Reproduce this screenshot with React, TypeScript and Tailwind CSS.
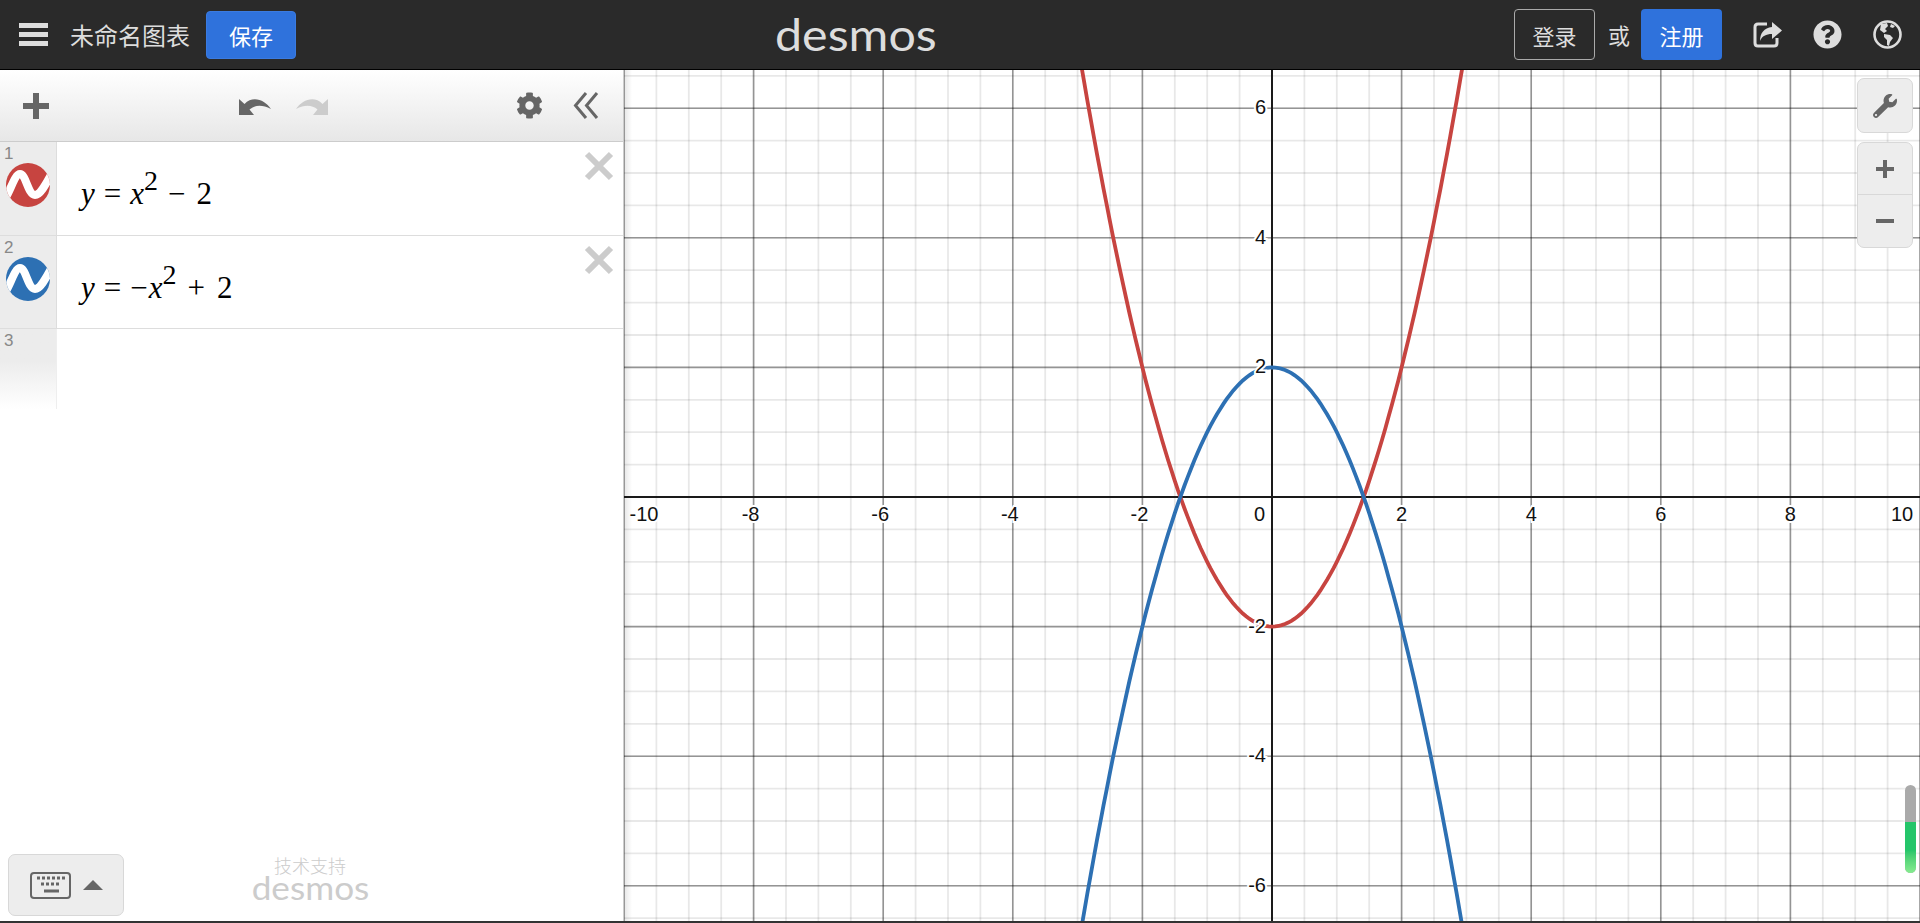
import React from 'react';
import { FaCog, FaQuestionCircle, FaWrench } from 'react-icons/fa';

const WIDTH = 1296;
const HEIGHT = 851;
const UNIT = 64.8;
const CX = WIDTH / 2;
const CY = 427;

const sx = (v: number) => CX + v * UNIT;
const sy = (v: number) => CY - v * UNIT;

function curve(fn: (x: number) => number) {
  const pts: string[] = [];
  for (let x = -3.4; x <= 3.4; x += 0.05) {
    pts.push(`${sx(x).toFixed(1)},${sy(fn(x)).toFixed(1)}`);
  }
  return pts.join(' ');
}

function range(from: number, to: number, step: number) {
  const out: number[] = [];
  for (let v = from; v <= to + 0.001; v += step) out.push(v);
  return out;
}

function Graph() {
  const xMinor = range(-10, 10, 0.5);
  const yMinor = range(-7, 7, 0.5);
  const xMajor = range(-10, 10, 2);
  const yMajor = range(-6, 6, 2);
  return (
    <svg width={WIDTH} height={HEIGHT} className="block">
      {xMinor.map(v => <line key={v} x1={sx(v)} x2={sx(v)} y1={0} y2={HEIGHT} stroke="#000" strokeOpacity={0.09} strokeWidth={1.8} />)}
      {yMinor.map(v => <line key={v} x1={0} x2={WIDTH} y1={sy(v)} y2={sy(v)} stroke="#000" strokeOpacity={0.09} strokeWidth={1.8} />)}
      {xMajor.map(v => <line key={v} x1={sx(v)} x2={sx(v)} y1={0} y2={HEIGHT} stroke="#000" strokeOpacity={0.36} strokeWidth={1.6} />)}
      {yMajor.map(v => <line key={v} x1={0} x2={WIDTH} y1={sy(v)} y2={sy(v)} stroke="#000" strokeOpacity={0.36} strokeWidth={1.6} />)}
      <line x1={sx(0)} x2={sx(0)} y1={0} y2={HEIGHT} stroke="#1a1a1a" strokeWidth={2} />
      <line x1={0} x2={WIDTH} y1={sy(0)} y2={sy(0)} stroke="#1a1a1a" strokeWidth={2} />
      <polyline points={curve(x => x * x - 2)} fill="none" stroke="#c74440" strokeWidth={3.8} />
      <polyline points={curve(x => -x * x + 2)} fill="none" stroke="#2d70b3" strokeWidth={3.8} />
      <g fontFamily="'Liberation Sans', Arial, sans-serif" fontSize={20} fill="#111" stroke="#fff" strokeWidth={4} paintOrder="stroke">
        {xMajor.filter(v => v !== 0).map(v => (
          <text key={v} x={v === -10 ? sx(v) + 20 : v === 10 ? sx(v) - 18 : sx(v) + (v < 0 ? -3 : 0)} y={sy(0) + 24} textAnchor="middle">{v}</text>
        ))}
        {yMajor.filter(v => v !== 0).map(v => (
          <text key={v} x={sx(0) - 6} y={sy(v) + 6} textAnchor="end">{v}</text>
        ))}
        <text x={sx(0) - 7} y={sy(0) + 24} textAnchor="end">0</text>
      </g>
    </svg>
  );
}

function ColorIcon({ color, id }: { color: string; id: string }) {
  return (
    <svg width={44} height={44} viewBox="0 0 44 44" className="block">
      <clipPath id={id}><circle cx={22} cy={22} r={22} /></clipPath>
      <circle cx={22} cy={22} r={22} fill={color} />
      <path clipPath={`url(#${id})`} d="M0 34 C5 26 9 11 14 11 C20 11 22 32 29 32 C34 32 39 23 46 10" fill="none" stroke="#fff" strokeWidth={8} />
    </svg>
  );
}

function CloseIcon() {
  return (
    <svg width={30} height={30} viewBox="0 0 30 30" className="block">
      <path d="M3 3 L27 27 M27 3 L3 27" stroke="#ccc" strokeWidth={6} />
    </svg>
  );
}

function PlusIcon({ size, thick }: { size: number; thick: number }) {
  const m = size / 2;
  return (
    <svg width={size} height={size} className="block">
      <path d={`M0 ${m} H${size} M${m} 0 V${size}`} stroke="#666" strokeWidth={thick} />
    </svg>
  );
}

function UndoIcon({ color, flip }: { color: string; flip?: boolean }) {
  return (
    <svg width={32} height={18} viewBox="0 0 32 18" className={flip ? 'block -scale-x-100' : 'block'}>
      <path d="M0 2 L0 18 L15 18 L10.5 12.5 C16 8 23 7.5 32 12 C26 3 14 -2 5.5 7 Z" fill={color} />
    </svg>
  );
}

function ShareIcon() {
  return (
    <svg width={29} height={27} viewBox="0 0 29 27" className="block">
      <path d="M14 3 H5 Q2 3 2 6 V22 Q2 25 5 25 H21 Q24 25 24 22 V17" fill="none" stroke="#ddd" strokeWidth={3} />
      <path d="M19 1 L29 9.5 L19 18 V13 C13 13 9 15 7 20 C7 12 11 7 19 6 Z" fill="#ddd" />
    </svg>
  );
}

function GlobeIcon() {
  return (
    <svg width={29} height={29} viewBox="0 0 29 29" className="block">
      <circle cx={14.5} cy={14.5} r={13} fill="none" stroke="#ddd" strokeWidth={2.6} />
      <path d="M8 4 L14 3 L15 6 L12 9 L14 11 L11 13 L7 10 Z M11 14 L17 15 L20 18 L17 22 L16 26 L14 25 L14 20 L11 17 Z M18 4 L22 6 L20 8 L17 7 Z" fill="#ddd" />
    </svg>
  );
}

function Row({ n, color, children }: { n: number; color: string; children: React.ReactNode }) {
  return (
    <div className="flex h-[93.5px] border-b border-[#ddd] relative">
      <div className="w-[57px] bg-[#ececec] border-r border-[#ddd] shrink-0 pl-[4px] pt-[2px]">
        <div className="text-[17px] leading-[19px] text-[#888]">{n}</div>
        <div className="ml-[2px]"><ColorIcon color={color} id={`wave-${n}`} /></div>
      </div>
      <div className="flex-1 pl-[24px] pt-[32px] text-[31px] leading-[40px] text-black font-['Liberation_Serif',serif] whitespace-nowrap">
        {children}
      </div>
      <div className="absolute top-[9px] right-[9px]"><CloseIcon /></div>
    </div>
  );
}

function Sup() {
  return <span className="text-[28px] relative -top-[14px] leading-none">2</span>;
}

export default function App() {
  return (
    <div className="w-[1920px] h-[923px] overflow-hidden flex flex-col bg-white font-['Liberation_Sans','Noto_Sans_CJK_SC',sans-serif]">
      {/* header */}
      <header className="h-[70px] shrink-0 bg-[#2a2a2a] border-b border-black relative flex items-center justify-between font-['Noto_Sans_CJK_SC',sans-serif]">
        <div className="flex items-center">
          <div className="ml-[19px] w-[29px] flex flex-col gap-[4px]">
            <div className="h-[5px] bg-[#ddd]" />
            <div className="h-[5px] bg-[#ddd]" />
            <div className="h-[5px] bg-[#ddd]" />
          </div>
          <span className="ml-[22px] text-[24px] leading-[32px] text-[#ddd]">未命名图表</span>
          <button className="ml-[16px] w-[90px] h-[48px] rounded-[4px] bg-[#2f72dc] border border-[#3b7be0] text-white text-[22px] leading-none">保存</button>
        </div>
        <div className="absolute left-[775px] top-[4px] origin-left scale-x-[1.1] text-[44px] leading-[60px] text-[#ddd] font-['Lato',sans-serif]">desmos</div>
        <div className="flex items-center pr-[18px]">
          <button className="w-[81px] h-[51px] rounded-[4px] border border-[#aaa] text-[#ddd] text-[22px] leading-none">登录</button>
          <span className="ml-[13px] text-[22px] text-[#ddd]">或</span>
          <button className="ml-[11px] w-[81px] h-[51px] rounded-[4px] bg-[#2f72dc] text-white text-[22px] leading-none">注册</button>
          <div className="ml-[31px]"><ShareIcon /></div>
          <FaQuestionCircle className="ml-[31px] text-[#ddd]" size={29} />
          <div className="ml-[31px]"><GlobeIcon /></div>
        </div>
      </header>

      <div className="flex flex-1 min-h-0">
        {/* expression list */}
        <aside className="w-[624px] shrink-0 border-r border-[#ccc] relative flex flex-col">
          <div className="h-[72px] shrink-0 bg-gradient-to-b from-white to-[#e7e7e7] border-b border-[#ccc] flex items-center">
            <div className="ml-[23px]"><PlusIcon size={26} thick={6} /></div>
            <div className="ml-[190px]"><UndoIcon color="#666" /></div>
            <div className="ml-[25px]"><UndoIcon color="#ccc" flip /></div>
            <FaCog className="ml-[188px] text-[#666]" size={27} />
            <svg width={26} height={27} viewBox="0 0 26 27" className="ml-[30px] block">
              <path d="M13 1 L2.5 13.5 L13 26 M24 1 L13.5 13.5 L24 26" fill="none" stroke="#666" strokeWidth={3} />
            </svg>
          </div>
          <Row n={1} color="#c74440">
            <i>y</i><span className="ml-[9px]">=</span><i className="ml-[9px]">x</i><Sup /><span className="ml-[10px]">−</span><span className="ml-[11px]">2</span>
          </Row>
          <Row n={2} color="#2d70b3">
            <i>y</i><span className="ml-[9px]">=</span><span className="ml-[9px]">−</span><i className="ml-[1px]">x</i><Sup /><span className="ml-[11px]">+</span><span className="ml-[12px]">2</span>
          </Row>
          <div className="w-[57px] h-[80px] bg-gradient-to-b from-[#ececec] from-[40%] to-white border-r border-[#eee] pl-[4px] pt-[2px]">
            <div className="text-[17px] leading-[19px] text-[#888]">3</div>
          </div>

          <div className="absolute left-[8px] bottom-[5px] w-[116px] h-[62px] rounded-[7px] bg-[#ededed] border border-[#d8d8d8] flex items-center">
            <svg width={41} height={27} viewBox="0 0 41 27" className="ml-[21px] block">
              <rect x={1} y={1} width={39} height={25} rx={3} fill="none" stroke="#666" strokeWidth={2} />
              <path d="M7 6 h3 M12 6 h3 M17 6 h3 M22 6 h3 M27 6 h3 M32 6 h3 M11 12 h3 M16 12 h3 M21 12 h3 M26 12 h3 M14 19 h15" stroke="#666" strokeWidth={3} />
            </svg>
            <div className="ml-[12px] w-0 h-0 border-l-[10px] border-r-[10px] border-b-[10px] border-l-transparent border-r-transparent border-b-[#666]" />
          </div>
          <div className="absolute left-[241px] bottom-[20px] w-[138px] flex flex-col items-center">
            <div className="text-[18px] leading-[20px] font-light text-[#ccc] font-['Noto_Sans_CJK_SC',sans-serif]">技术支持</div>
            <div className="scale-x-[1.1] text-[32px] leading-[26px] text-[#ccc] font-['Lato',sans-serif]">desmos</div>
          </div>
        </aside>

        {/* graph paper */}
        <main className="flex-1 relative overflow-hidden">
          <Graph />
          <div className="absolute left-0 top-0 bottom-0 w-[8px] bg-gradient-to-r from-black/10 to-transparent" />
          <div className="absolute top-[8px] right-[7px] flex flex-col gap-[9px]">
            <div className="w-[56px] h-[55px] rounded-[7px] bg-[#ededed] border border-[#d8d8d8] flex items-center justify-center">
              <FaWrench className="text-[#666]" size={24} />
            </div>
            <div className="w-[56px] h-[106px] rounded-[7px] bg-[#ededed] border border-[#d8d8d8] flex flex-col">
              <div className="h-[52px] border-b border-[#d8d8d8] flex items-center justify-center"><PlusIcon size={18} thick={4} /></div>
              <div className="flex-1 flex items-center justify-center"><div className="w-[18px] h-[4px] bg-[#666]" /></div>
            </div>
          </div>
          <div className="absolute left-[1281px] top-[715px] w-[11px] h-[88px] rounded-full overflow-hidden bg-[#aaa] shadow-[0_0_6px_rgba(255,255,255,0.9)]">
            <div className="mt-[37px] h-[51px] bg-gradient-to-b from-[#24c56a] from-[55%] to-[#86ec90]" />
          </div>
        </main>
      </div>
      <div className="h-[2px] shrink-0 bg-[#333]" />
    </div>
  );
}
